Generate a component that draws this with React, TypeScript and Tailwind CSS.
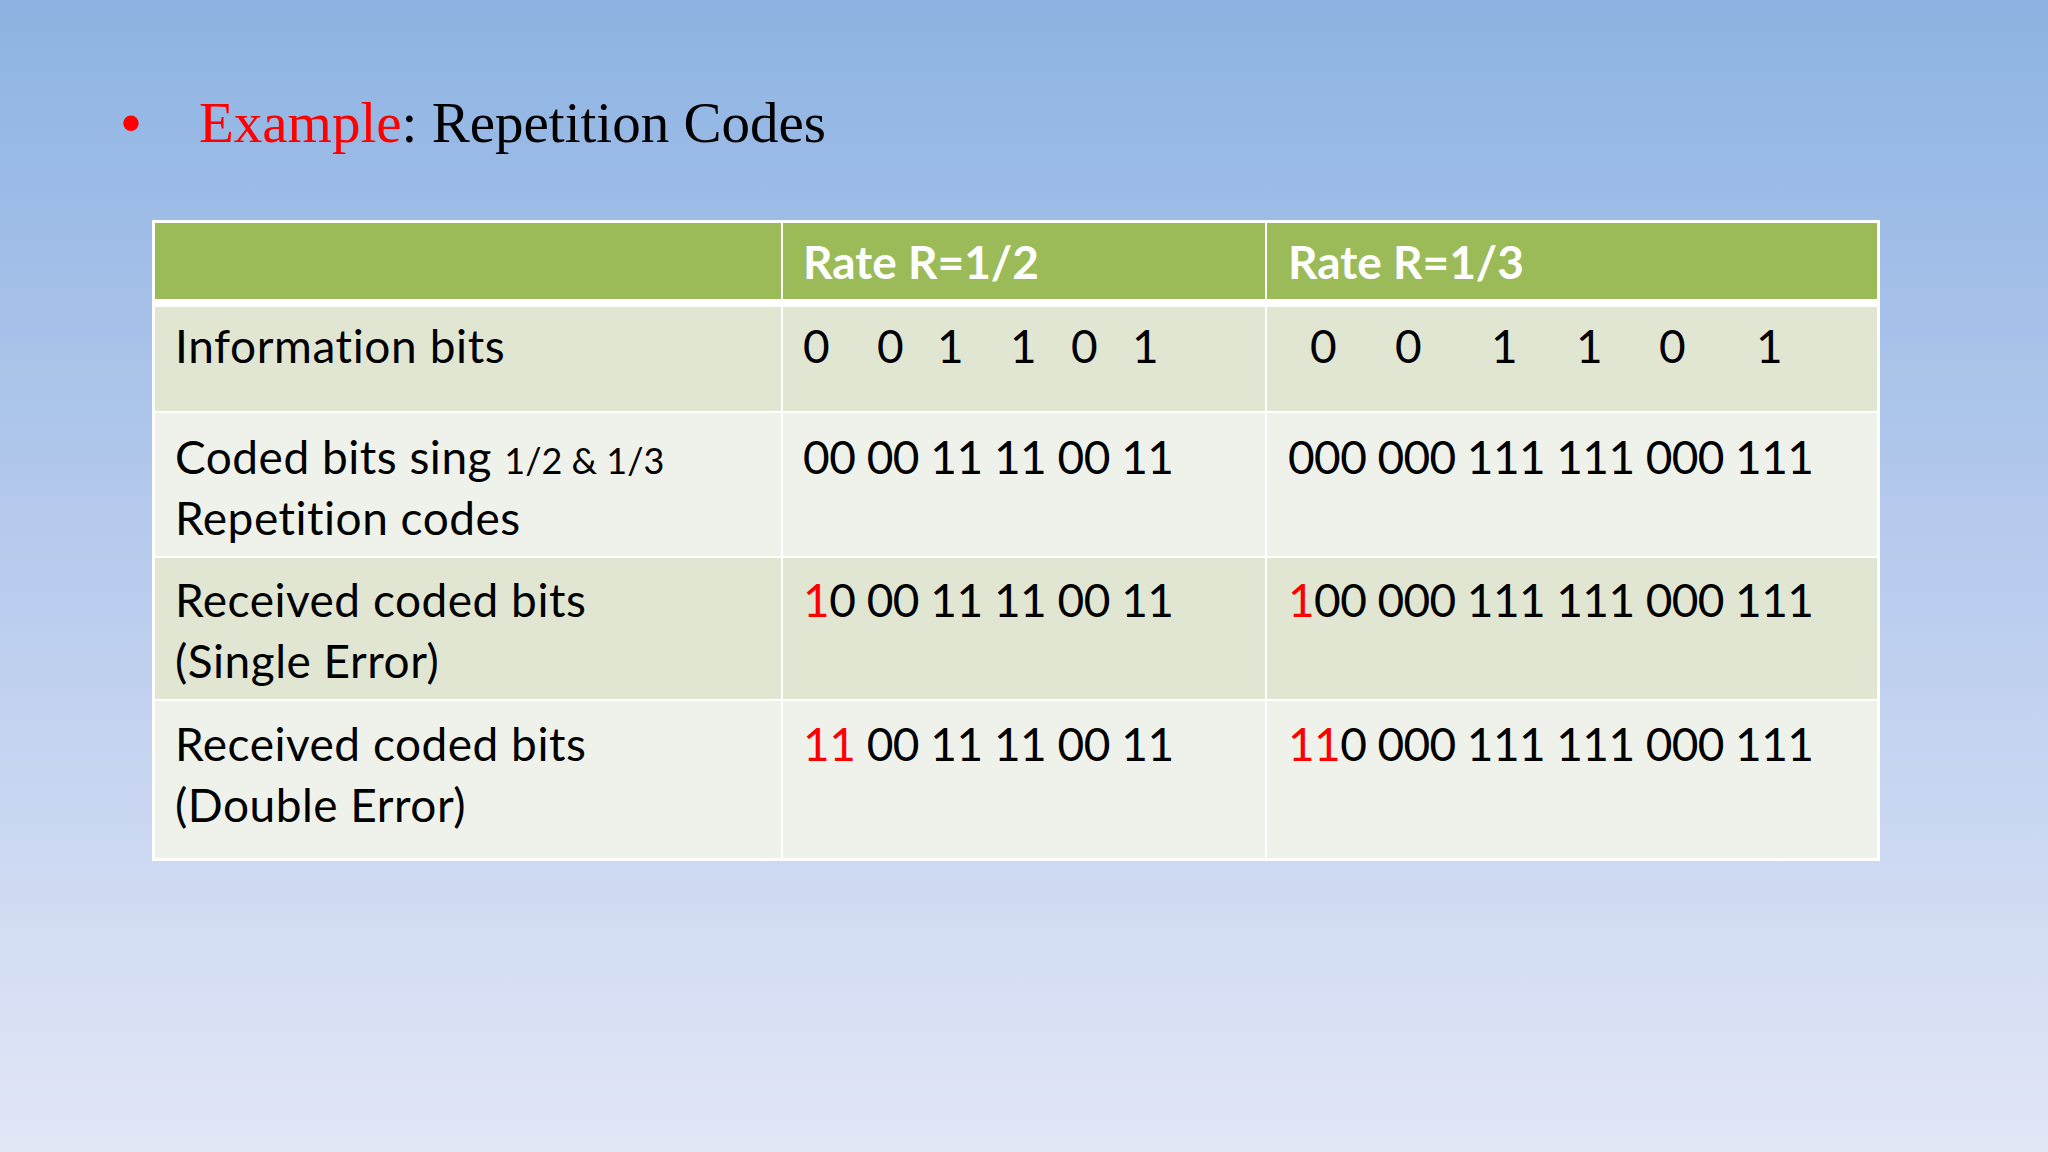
const rowDark = "bg-[#e1e6d3]";
const rowLight = "bg-[#eff2ea]";

function Red({ children }: { children: React.ReactNode }) {
  return <span className="text-[#ff0000]">{children}</span>;
}

function Bits({ gaps, lead }: { gaps: number[]; lead: number }) {
  // information bits are spaced unevenly in the source slide
  const digits = ["0", "0", "1", "1", "0", "1"];
  return (
    <div className="flex" style={{ paddingLeft: lead }}>
      {digits.map((d, i) => (
        <span key={i} className="w-[26px] text-center" style={{ marginLeft: i === 0 ? 0 : gaps[i - 1] }}>
          {d}
        </span>
      ))}
    </div>
  );
}

export default function App() {
  return (
    <div className="w-[2048px] h-[1152px] overflow-hidden bg-linear-to-b from-[#8db3e2] via-[#b9ccee] to-[#e2e7f6]">
      <div className="flex items-baseline pl-[121px] pt-[94px] font-['Liberation_Serif',serif] text-[57px] leading-[57px]">
        <span className="w-[78px] text-[#ff0000] font-['Liberation_Sans',sans-serif]">•</span>
        <span>
          <Red>Example</Red>
          <span className="text-black">: Repetition Codes</span>
        </span>
      </div>

      <div className="ml-[152px] mt-[69px] w-[1728px] bg-white p-[3px] font-[Lato,sans-serif] text-[46px] leading-[61px] text-black">
        <div className="grid grid-cols-[626px_482px_610px] gap-[2px] h-[76px] font-bold text-white">
          <div className="bg-[#9bbb59]" />
          <div className="bg-[#9bbb59] pl-[20px] pt-[8px]">Rate R=1/2</div>
          <div className="bg-[#9bbb59] pl-[21px] pt-[8px]">Rate R=1/3</div>
        </div>

        <div className="mt-[8px] flex flex-col gap-[2px]">
          <div className="grid grid-cols-[626px_482px_610px] gap-[2px] h-[104px]">
            <div className={`${rowDark} pl-[20px] pt-[8px] tracking-[0.6px]`}>Information bits</div>
            <div className={`${rowDark} pl-[20px] pt-[8px]`}>
              <Bits lead={0} gaps={[48, 34, 47, 35, 35]} />
            </div>
            <div className={`${rowDark} pl-[21px] pt-[8px]`}>
              <Bits lead={22} gaps={[59, 70, 59, 57, 71]} />
            </div>
          </div>

          <div className="grid grid-cols-[626px_482px_610px] gap-[2px] h-[143px]">
            <div className={`${rowLight} pl-[20px] pt-[13px] tracking-[0.5px]`}>
              Coded bits sing <span className="text-[36px] leading-none tracking-normal">1/2 &amp; 1/3</span>
              <br />
              Repetition codes
            </div>
            <div className={`${rowLight} pl-[20px] pt-[13px] tracking-[-0.5px]`}>00 00 11 11 00 11</div>
            <div className={`${rowLight} pl-[21px] pt-[13px] tracking-[-0.6px]`}>000 000 111 111 000 111</div>
          </div>

          <div className="grid grid-cols-[626px_482px_610px] gap-[2px] h-[141px]">
            <div className={`${rowDark} pl-[20px] pt-[11px] tracking-[0.5px]`}>
              Received coded bits
              <br />
              (Single Error)
            </div>
            <div className={`${rowDark} pl-[20px] pt-[11px] tracking-[-0.5px]`}>
              <Red>1</Red>0 00 11 11 00 11
            </div>
            <div className={`${rowDark} pl-[21px] pt-[11px] tracking-[-0.6px]`}>
              <Red>1</Red>00 000 111 111 000 111
            </div>
          </div>

          <div className="grid grid-cols-[626px_482px_610px] gap-[2px] h-[157px]">
            <div className={`${rowLight} pl-[20px] pt-[12px] tracking-[0.5px]`}>
              Received coded bits
              <br />
              (Double Error)
            </div>
            <div className={`${rowLight} pl-[20px] pt-[12px] tracking-[-0.5px]`}>
              <Red>11</Red> 00 11 11 00 11
            </div>
            <div className={`${rowLight} pl-[21px] pt-[12px] tracking-[-0.6px]`}>
              <Red>11</Red>0 000 111 111 000 111
            </div>
          </div>
        </div>
      </div>
    </div>
  );
}
